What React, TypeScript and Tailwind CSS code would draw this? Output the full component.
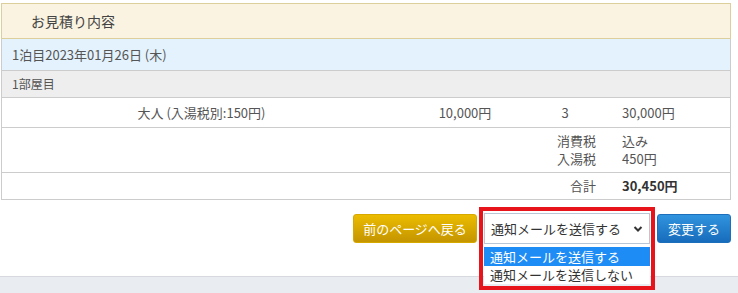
import React from "react";

export default function App() {
  return (
    <div
      className="relative w-[738px] h-[293px] overflow-hidden bg-white text-[#555]"
      style={{ fontFamily: '"Noto Sans CJK JP", "Noto Sans", sans-serif' }}
    >
      <div className="pt-[3px] pl-[1px] w-[731px]">
        <div className="h-[36px] border border-[#dccf9c] bg-[#faf3e1] flex items-center pl-[29px] text-[14px] text-[#444]">
          お見積り内容
        </div>
        <div className="border-x border-[#cccccc] text-[13px]">
          <div className="h-[32px] bg-[#e3f2fd] border-b border-[#cccccc] flex items-center pl-[10px] text-[13px]">
            1泊目2023年01月26日 (木)
          </div>
          <div className="h-[27px] bg-[#eeeeee] border-b border-[#cccccc] flex items-center pl-[10px] text-[12px]">
            1部屋目
          </div>
          <div className="h-[30px] border-b border-[#cccccc] grid grid-cols-[399px_128px_72px_1fr] items-center">
            <div className="text-center">大人 (入湯税別:150円)</div>
            <div className="text-center">10,000円</div>
            <div className="text-center">3</div>
            <div className="pl-[21px]">30,000円</div>
          </div>
          <div className="h-[45px] border-b border-[#cccccc] grid grid-cols-[594px_1fr] content-center leading-[18px]">
            <div className="text-right">消費税</div>
            <div className="pl-[26px]">込み</div>
            <div className="text-right">入湯税</div>
            <div className="pl-[26px]">450円</div>
          </div>
          <div className="h-[27px] border-b border-[#cccccc] grid grid-cols-[594px_1fr] items-center">
            <div className="text-right">合計</div>
            <div className="pl-[26px] font-bold text-[#333]">30,450円</div>
          </div>
        </div>
        <div className="mt-[13px] h-[31px] flex items-center justify-end gap-[7px]">
          <div className="h-[29px] w-[124px] rounded-[3px] border border-[#d6a800] bg-gradient-to-b from-[#ecbc00] to-[#c49500] text-white text-[13px] flex items-center justify-center">
            前のページへ戻る
          </div>
          <div className="relative h-[31px] w-[166px] border border-[#b8c6d6] bg-white text-[#333] text-[13px] flex items-center pl-[6px]">
            通知メールを送信する
            <svg className="absolute right-[6px] top-[11px]" width="10" height="8" viewBox="0 0 10 8">
              <path d="M1.5 2 L5 5.5 L8.5 2" fill="none" stroke="#333" strokeWidth="2" />
            </svg>
          </div>
          <div className="h-[29px] w-[74px] rounded-[3px] border border-[#1d6fbb] bg-gradient-to-b from-[#3194de] to-[#176cbb] text-white text-[13px] flex items-center justify-center">
            変更する
          </div>
        </div>
        <div className="mt-[32px] h-[20px] border-t border-[#d6dade] bg-[#e9edf2] w-[738px] -ml-[1px]" />
      </div>

      <div className="absolute left-[484px] top-[247px] w-[166px] bg-white text-[13px] leading-[18px]">
        <div className="h-[19px] bg-[#1e8cf5] text-white pl-[6px] flex items-center">通知メールを送信する</div>
        <div className="h-[18px] text-[#333] pl-[6px] flex items-center">通知メールを送信しない</div>
      </div>

      <div className="absolute left-[479px] top-[207px] w-[176px] h-[83px] border-[4px] border-[#e8141c]" />
    </div>
  );
}
